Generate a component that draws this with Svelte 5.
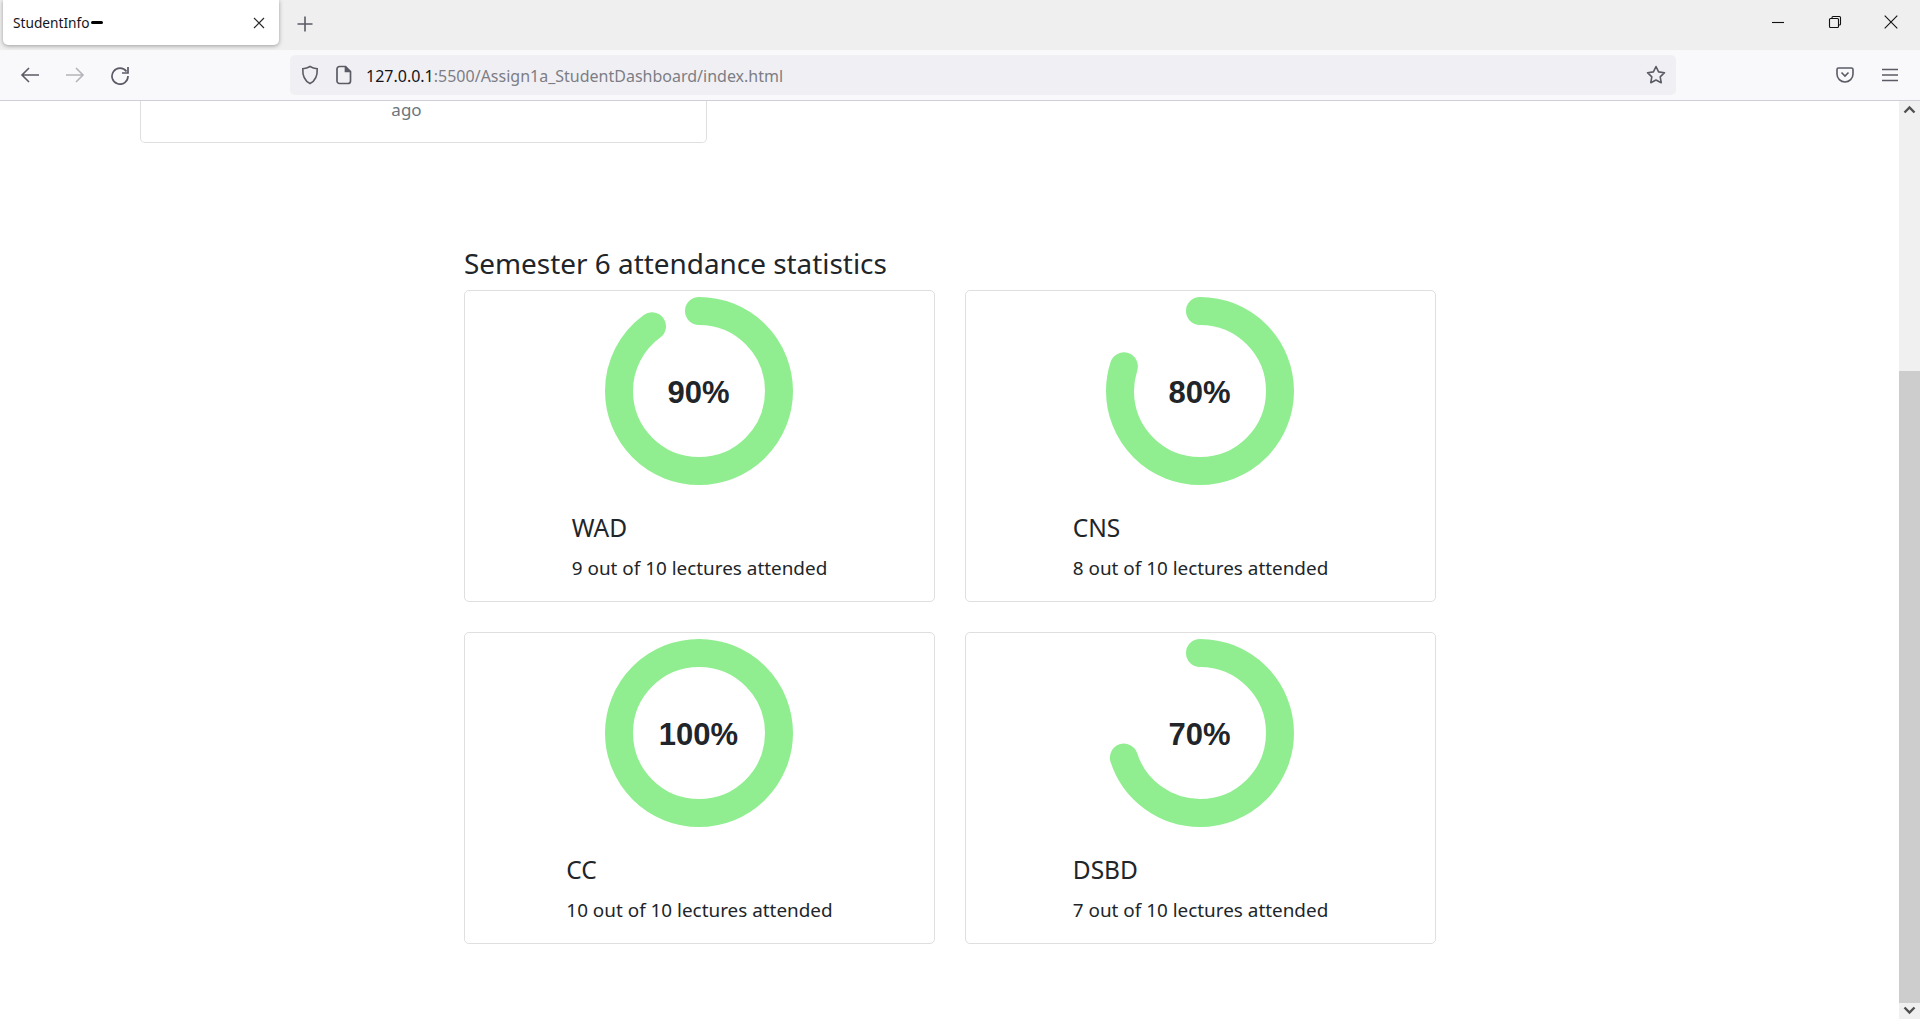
<script>
  // attendance per subject, shown as donut rings
  const subjects = [
    { name: "WAD", attended: 9 },
    { name: "CNS", attended: 8 },
    { name: "CC", attended: 10 },
    { name: "DSBD", attended: 7 },
  ];
  const total = 10;
</script>

<div class="window">
  <div class="tabbar">
    <div class="tab">
      <span class="tab-title">StudentInfo</span>
      <span class="tab-mark"></span>
      <svg class="tab-close" width="12" height="12" viewBox="0 0 12 12">
        <path d="M1 1l10 10M11 1L1 11" stroke="#2b2b2f" stroke-width="1.2" fill="none" />
      </svg>
    </div>
    <svg class="new-tab" width="18" height="18" viewBox="0 0 18 18">
      <path d="M9 1.5v15M1.5 9h15" stroke="#5b5b66" stroke-width="1.6" fill="none" />
    </svg>
    <div class="win-controls">
      <svg width="14" height="14" viewBox="0 0 14 14"><path d="M1 7.5h12" stroke="#111" stroke-width="1.1" /></svg>
      <svg width="14" height="14" viewBox="0 0 14 14" fill="none" stroke="#111" stroke-width="1.1">
        <rect x="1.5" y="3.5" width="9" height="9" rx="1" />
        <path d="M4 3.5V2.5a1 1 0 0 1 1-1h6.5a1 1 0 0 1 1 1V9a1 1 0 0 1-1 1h-1" />
      </svg>
      <svg width="14" height="14" viewBox="0 0 14 14"><path d="M.7.7l12.6 12.6M13.3.7L.7 13.3" stroke="#111" stroke-width="1.1" /></svg>
    </div>
  </div>

  <div class="toolbar">
    <svg class="nav first" width="20" height="20" viewBox="0 0 20 20" fill="none" stroke="#5b5b66" stroke-width="1.6">
      <path d="M19 10H2M9 3l-7 7 7 7" />
    </svg>
    <svg class="nav" width="20" height="20" viewBox="0 0 20 20" fill="none" stroke="#b4b4b9" stroke-width="1.6">
      <path d="M1 10h17M11 3l7 7-7 7" />
    </svg>
    <svg class="nav" width="20" height="20" viewBox="0 0 20 20" fill="none" stroke="#5b5b66" stroke-width="1.7">
      <path d="M16.5 6.5A8 8 0 1 0 18 11" />
      <path d="M18 2v6h-6" />
    </svg>

    <div class="urlbar">
      <svg width="18" height="20" viewBox="0 0 18 20" fill="none" stroke="#5b5b66" stroke-width="1.6">
        <path d="M9 1.5c2.5 1.5 5 2 7.2 2.2C16.6 11 14 16 9 18.5 4 16 1.4 11 1.8 3.7 4 3.500 6.500 3 9 1.500z" />
      </svg>
      <svg class="page-icon" width="16" height="20" viewBox="0 0 16 20" fill="none" stroke="#5b5b66" stroke-width="1.7">
        <path d="M3.500 1.500h6l5 5v9.500a2.500 2.500 0 0 1-2.500 2.500H3.500A2.500 2.500 0 0 1 1 16V4a2.500 2.500 0 0 1 2.500-2.500z" />
        <path d="M9.500 1.500v5h5" fill="#5b5b66" />
      </svg>
      <span class="url"><span class="host">127.0.0.1</span>:5500/Assign1a_StudentDashboard/index.html</span>
      <svg class="star" width="20" height="20" viewBox="0 0 20 20" fill="none" stroke="#5b5b66" stroke-width="1.6" stroke-linejoin="round">
        <path d="M10 1.500l2.600 5.400 5.900.8-4.300 4.100 1 5.900L10 15l-5.200 2.700 1-5.900L1.500 7.700l5.900-.8z" />
      </svg>
    </div>

    <svg class="pocket" width="18" height="16" viewBox="0 0 18 16" fill="none" stroke="#5b5b66" stroke-width="1.6">
      <path d="M2.500 1h13A1.500 1.500 0 0 1 17 2.500V7a8 8 0 0 1-16 0V2.500A1.500 1.500 0 0 1 2.500 1z" />
      <path d="M5.500 5.500L9 9l3.500-3.500" />
    </svg>
    <svg class="menu" width="16" height="14" viewBox="0 0 16 14" stroke="#5b5b66" stroke-width="1.6">
      <path d="M0 1.500h16M0 7h16M0 12.500h16" />
    </svg>
  </div>

  <div class="viewport">
    <main class="page">
      <div class="prev-card"><small>ago</small></div>

      <section class="stats">
        <h3>Semester 6 attendance statistics</h3>
        <div class="grid">
          {#each subjects as s}
            <div class="card">
              <div class="ring">
                <svg width="200" height="200" viewBox="0 0 200 200">
                  <circle
                    cx="100"
                    cy="100"
                    r="80"
                    fill="none"
                    stroke="lightgreen"
                    stroke-width="28"
                    stroke-linecap="round"
                    pathLength="100"
                    stroke-dasharray="{(s.attended / total) * 100} 100"
                    transform="rotate(-90 100 100)"
                  />
                </svg>
                <span class="pct">{(s.attended / total) * 100}%</span>
              </div>
              <div class="card-body">
                <h5>{s.name}</h5>
                <p>{s.attended} out of {total} lectures attended</p>
              </div>
            </div>
          {/each}
        </div>
      </section>
    </main>

    <div class="scrollbar">
      <div class="sb-btn">
        <svg width="13" height="9" viewBox="0 0 13 9"><path d="M1.500 7.500l5-5 5 5" fill="none" stroke="#505050" stroke-width="2.400" /></svg>
      </div>
      <div class="sb-track"><div class="sb-thumb"></div></div>
      <div class="sb-btn">
        <svg width="13" height="9" viewBox="0 0 13 9"><path d="M1.500 1.500l5 5 5-5" fill="none" stroke="#505050" stroke-width="2.400" /></svg>
      </div>
    </div>
  </div>
</div>

<style>
  :global(body) {
    margin: 0;
    background: #fff;
  }

  .window {
    width: 1920px;
    height: 1019px;
    display: flex;
    flex-direction: column;
    overflow: hidden;
    font-family: "Noto Sans", "Open Sans", sans-serif;
    color: #212529;
  }

  /* browser chrome */
  .tabbar {
    height: 50px;
    background: #efeff0;
    display: flex;
    align-items: center;
    flex-shrink: 0;
  }
  .tab {
    width: 276px;
    height: 45px;
    margin: 0 0 5px 3px;
    box-sizing: border-box;
    padding: 0 14px 0 10px;
    background: #fff;
    border-radius: 0 0 5px 5px;
    box-shadow: 0 1px 4px rgba(0, 0, 0, 0.35);
    display: flex;
    align-items: center;
    font-size: 13.700px;
    color: #15141a;
  }
  .tab-mark {
    width: 12px;
    height: 3px;
    margin-left: 1px;
    background: #000;
    border-radius: 2px;
  }
  .tab-close {
    margin-left: auto;
  }
  .new-tab {
    margin-left: 17px;
    margin-bottom: 2px;
  }
  .win-controls {
    margin-left: auto;
    display: flex;
    gap: 42.500px;
    padding: 0 22px 6px 0;
  }

  .toolbar {
    height: 51px;
    box-sizing: border-box;
    background: #f9f9fb;
    border-bottom: 1px solid #cfcfd8;
    display: flex;
    align-items: center;
    flex-shrink: 0;
  }
  .nav {
    margin-left: 25px;
  }
  .nav.first {
    margin-left: 20px;
  }
  .urlbar {
    width: 1386px;
    height: 40px;
    margin-left: 160px;
    box-sizing: border-box;
    padding: 0 10px 0 11px;
    background: #f0f0f4;
    border-radius: 5px;
    display: flex;
    align-items: center;
  }
  .page-icon {
    margin-left: 17px;
  }
  .url {
    margin-left: 14px;
    padding-top: 2px;
    font-size: 16px;
    color: #7d7d85;
  }
  .host {
    color: #15141a;
  }
  .star {
    margin-left: auto;
  }
  .pocket {
    margin-left: 160px;
  }
  .menu {
    margin-left: 28px;
  }

  /* page area */
  .viewport {
    flex: 1;
    display: flex;
    min-height: 0;
  }
  .page {
    flex: 1;
    min-width: 0;
  }
  .scrollbar {
    width: 21px;
    display: flex;
    flex-direction: column;
    background: #f0f0f0;
  }
  .sb-btn {
    height: 18px;
    display: flex;
    align-items: center;
    justify-content: center;
  }
  .sb-track {
    flex: 1;
    padding-top: 253px;
    box-sizing: border-box;
  }
  .sb-thumb {
    height: 632px;
    background: #cdcdcd;
  }

  .prev-card {
    width: 567px;
    height: 42px;
    margin-left: 140px;
    box-sizing: border-box;
    border: 1px solid rgba(0, 0, 0, 0.125);
    border-top: 0;
    border-radius: 0 0 5px 5px;
    padding-right: 34px;
    text-align: center;
    line-height: 18px;
  }
  .prev-card small {
    font-size: 17px;
    color: #6c757d;
  }

  .stats {
    width: 972px;
    margin: 97px 0 0 464px;
  }
  h3 {
    margin: 0 0 4px;
    font-size: 27.900px;
    font-weight: 400;
    line-height: 46px;
  }
  .grid {
    display: grid;
    grid-template-columns: 471px 471px;
    gap: 30px;
  }
  .card {
    height: 312px;
    box-sizing: border-box;
    border: 1px solid rgba(0, 0, 0, 0.125);
    border-radius: 5px;
    display: flex;
    flex-direction: column;
    align-items: center;
  }
  .ring {
    position: relative;
    width: 200px;
    height: 200px;
    margin-right: 2px;
  }
  .ring svg {
    display: block;
  }
  .pct {
    position: absolute;
    inset: 0;
    padding-top: 3px;
    display: flex;
    align-items: center;
    justify-content: center;
    font-family: "Liberation Sans", Arial, sans-serif;
    font-size: 31px;
    font-weight: 700;
  }
  .card-body {
    padding-top: 22px;
  }
  h5 {
    margin: 0 0 10px;
    font-size: 24.500px;
    font-weight: 400;
    line-height: 30px;
  }
  p {
    margin: 0;
    font-size: 18.900px;
    line-height: 30px;
  }
</style>
